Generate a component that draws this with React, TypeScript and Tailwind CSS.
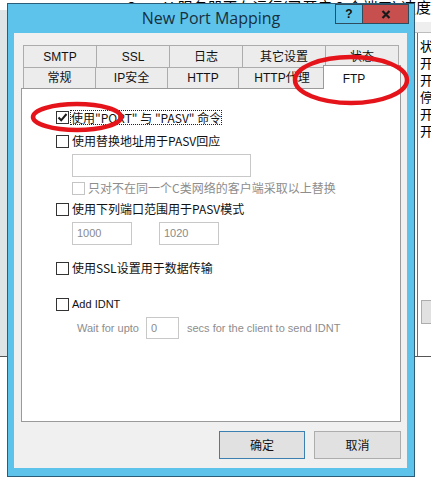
import React from "react";

function Check({ checked = false, disabled = false }: { checked?: boolean; disabled?: boolean }) {
  return (
    <span
      className={
        disabled
          ? "w-[13px] h-[13px] border border-[#c4c4c4] bg-white flex items-center justify-center shrink-0"
          : "w-[13px] h-[13px] border border-[#333333] bg-white flex items-center justify-center shrink-0"
      }
    >
      {checked && (
        <svg width="11" height="11" viewBox="0 0 11 11">
          <path d="M1.5 5.5 L4.2 8.3 L9.5 2" stroke="#1a1a1a" strokeWidth="2" fill="none" />
        </svg>
      )}
    </span>
  );
}

function Tab({ label, w, first = false }: { label: string; w: string; first?: boolean }) {
  return (
    <div
      className={
        (first ? "" : "-ml-[1px] ") +
        w +
        " h-full border-l border-t border-r border-[#acacac] bg-[#ececec] flex items-center justify-center text-[12px] text-[#111] font-['Liberation_Sans','Noto_Sans_CJK_SC',sans-serif]"
      }
    >
      {label}
    </div>
  );
}

export default function App() {
  return (
    <div className="relative isolate w-[431px] h-[479px] overflow-hidden bg-white">
      {/* background desktop / main window */}
      <div className="absolute z-0 top-[-1px] right-0 text-[15px] leading-[16px] text-black whitespace-nowrap font-['Noto_Sans_CJK_SC',sans-serif]">
        Serv-U 服务器正在运行(已开启 2 个端口) 速度
      </div>
      <div className="absolute z-0 left-0 top-[10px] w-[8px] h-[347px] bg-[#dfe4e7] border-b border-[#555]" />
      <div className="absolute z-0 left-[414px] top-[22px] w-[17px] h-[11px] bg-[#eeeeee] border-b border-[#bdbdbd]" />
      <div className="absolute z-0 left-[417px] top-[33px] w-[14px] h-[323px] border-l border-[#6b6b6b] bg-white flex flex-col pt-[4px] pl-[2px] text-[13px] leading-[17px] text-black font-['Noto_Sans_CJK_SC',sans-serif]">
        <span>状</span>
        <span>开</span>
        <span>开</span>
        <span>停</span>
        <span>开</span>
        <span>开</span>
      </div>
      <div className="absolute z-0 left-[421px] top-[300px] w-[14px] h-[24px] border border-[#adadad] bg-[#e1e1e1]" />
      <div className="absolute z-0 left-[414px] top-[356px] w-[17px] h-px bg-[#555]" />

      {/* dialog */}
      <div className="absolute z-10 left-[7px] top-[3px] w-[408px] h-[474px] border border-[#2b5d78] bg-[#5ec3ea] flex flex-col">
        <div className="relative h-[29px] shrink-0 flex items-center justify-center">
          <span className="text-[16px] text-[#18303f] font-['Open_Sans',sans-serif] -mt-[2px]">New Port Mapping</span>
          <div className="absolute top-0 right-[5px] flex h-[20px]">
            <div className="w-[28px] h-full border border-[#2d4d5e] bg-[#5ec3ea] flex items-center justify-center text-[12px] font-bold text-[#111] font-['Liberation_Sans',sans-serif]">
              ?
            </div>
            <div className="-ml-[1px] w-[47px] h-full border border-[#2d4d5e] bg-[#c7504f] flex items-center justify-center">
              <svg width="10" height="9" viewBox="0 0 10 9">
                <path d="M1.5 1 L8.5 8 M8.5 1 L1.5 8" stroke="#1a1a1a" strokeWidth="2.2" />
              </svg>
            </div>
          </div>
        </div>

        <div className="ml-[6px] mr-[7px] h-[435px] bg-[#f0f0f0] pt-[12px] pl-[7px] pr-[6px] flex flex-col">
          {/* tabs */}
          <div className="flex h-[22px] ml-[2px]">
            <Tab label="SMTP" w="w-[74px]" first />
            <Tab label="SSL" w="w-[74px]" />
            <Tab label="日志" w="w-[74px]" />
            <Tab label="其它设置" w="w-[84px]" />
            <Tab label="状态" w="w-[74px]" />
          </div>
          <div className="flex h-[21px] ml-[2px]">
            <Tab label="常规" w="w-[73px]" first />
            <Tab label="IP安全" w="w-[73px]" />
            <Tab label="HTTP" w="w-[72px]" />
            <Tab label="HTTP代理" w="w-[88px]" />
            <div className="relative z-10 -ml-[3px] -mt-[2px] w-[78px] h-[24px] border-l border-t border-r border-[#9a9a9a] bg-white flex items-start justify-center pt-[4px] pr-[16px] text-[12px] text-[#111] font-['Liberation_Sans',sans-serif]">
              FTP
            </div>
          </div>

          {/* panel */}
          <div className="w-[380px] h-[334px] border border-[#9a9a9a] bg-white pl-[34px] flex flex-col text-[12px] text-[#111] font-['Noto_Sans_CJK_SC',sans-serif]">
            <div className="mt-[20px] h-[16px] flex items-center">
              <Check checked />
              <span className="ml-[1px] px-[1px] h-[15px] leading-[15px] outline outline-1 outline-dotted outline-[#222] -outline-offset-1 whitespace-nowrap">
                使用"PORT" 与 "PASV" 命令
              </span>
            </div>
            <div className="mt-[8px] h-[16px] flex items-center">
              <Check />
              <span className="ml-[3px] leading-[16px]">使用替换地址用于PASV回应</span>
            </div>
            <div className="mt-[5px] ml-[16px] w-[179px] h-[23px] border border-[#c8c8c8] bg-white" />
            <div className="mt-[3px] ml-[16px] h-[16px] flex items-center">
              <Check disabled />
              <span className="ml-[3px] leading-[16px] text-[#8d8d8d]">只对不在同一个C类网络的客户端采取以上替换</span>
            </div>
            <div className="mt-[5px] h-[16px] flex items-center">
              <Check />
              <span className="ml-[3px] leading-[16px]">使用下列端口范围用于PASV模式</span>
            </div>
            <div className="mt-[5px] ml-[16px] flex gap-[27px] font-['Liberation_Sans',sans-serif] text-[11px] text-[#8a8a8a]">
              <div className="w-[60px] h-[23px] border border-[#c8c8c8] bg-white pl-[4px] flex items-center">1000</div>
              <div className="w-[60px] h-[23px] border border-[#c8c8c8] bg-white pl-[4px] flex items-center">1020</div>
            </div>
            <div className="mt-[15px] h-[16px] flex items-center">
              <Check />
              <span className="ml-[3px] leading-[16px]">使用SSL设置用于数据传输</span>
            </div>
            <div className="mt-[20px] h-[16px] flex items-center">
              <Check />
              <span className="ml-[3px] leading-[16px] text-[11px] font-['Liberation_Sans',sans-serif]">Add IDNT</span>
            </div>
            <div className="mt-[5px] ml-[21px] h-[22px] flex items-center text-[11px] text-[#8d8d8d] font-['Liberation_Sans',sans-serif] whitespace-nowrap">
              <span>Wait for upto</span>
              <div className="ml-[7px] w-[33px] h-[22px] border border-[#c8c8c8] bg-white pl-[4px] flex items-center text-[#8a8a8a]">0</div>
              <span className="ml-[8px]">secs for the client to send IDNT</span>
            </div>
          </div>

          {/* buttons */}
          <div className="mt-[9px] flex justify-end gap-[9px] text-[12px] text-[#111] font-['Noto_Sans_CJK_SC',sans-serif]">
            <button className="w-[86px] h-[28px] border border-[#3c7fb1] bg-[#e1e1e1] flex items-center justify-center">确定</button>
            <button className="w-[87px] h-[28px] border border-[#adadad] bg-[#e1e1e1] flex items-center justify-center">取消</button>
          </div>
        </div>
      </div>

      {/* red annotation ellipses */}
      <svg className="absolute z-20 left-0 top-0 pointer-events-none" width="431" height="479" viewBox="0 0 431 479">
        <ellipse cx="351" cy="80" rx="56" ry="23" fill="none" stroke="#e5141b" strokeWidth="4.5" />
        <ellipse cx="77" cy="117" rx="44" ry="13" fill="none" stroke="#e5141b" strokeWidth="4.5" />
      </svg>
    </div>
  );
}
